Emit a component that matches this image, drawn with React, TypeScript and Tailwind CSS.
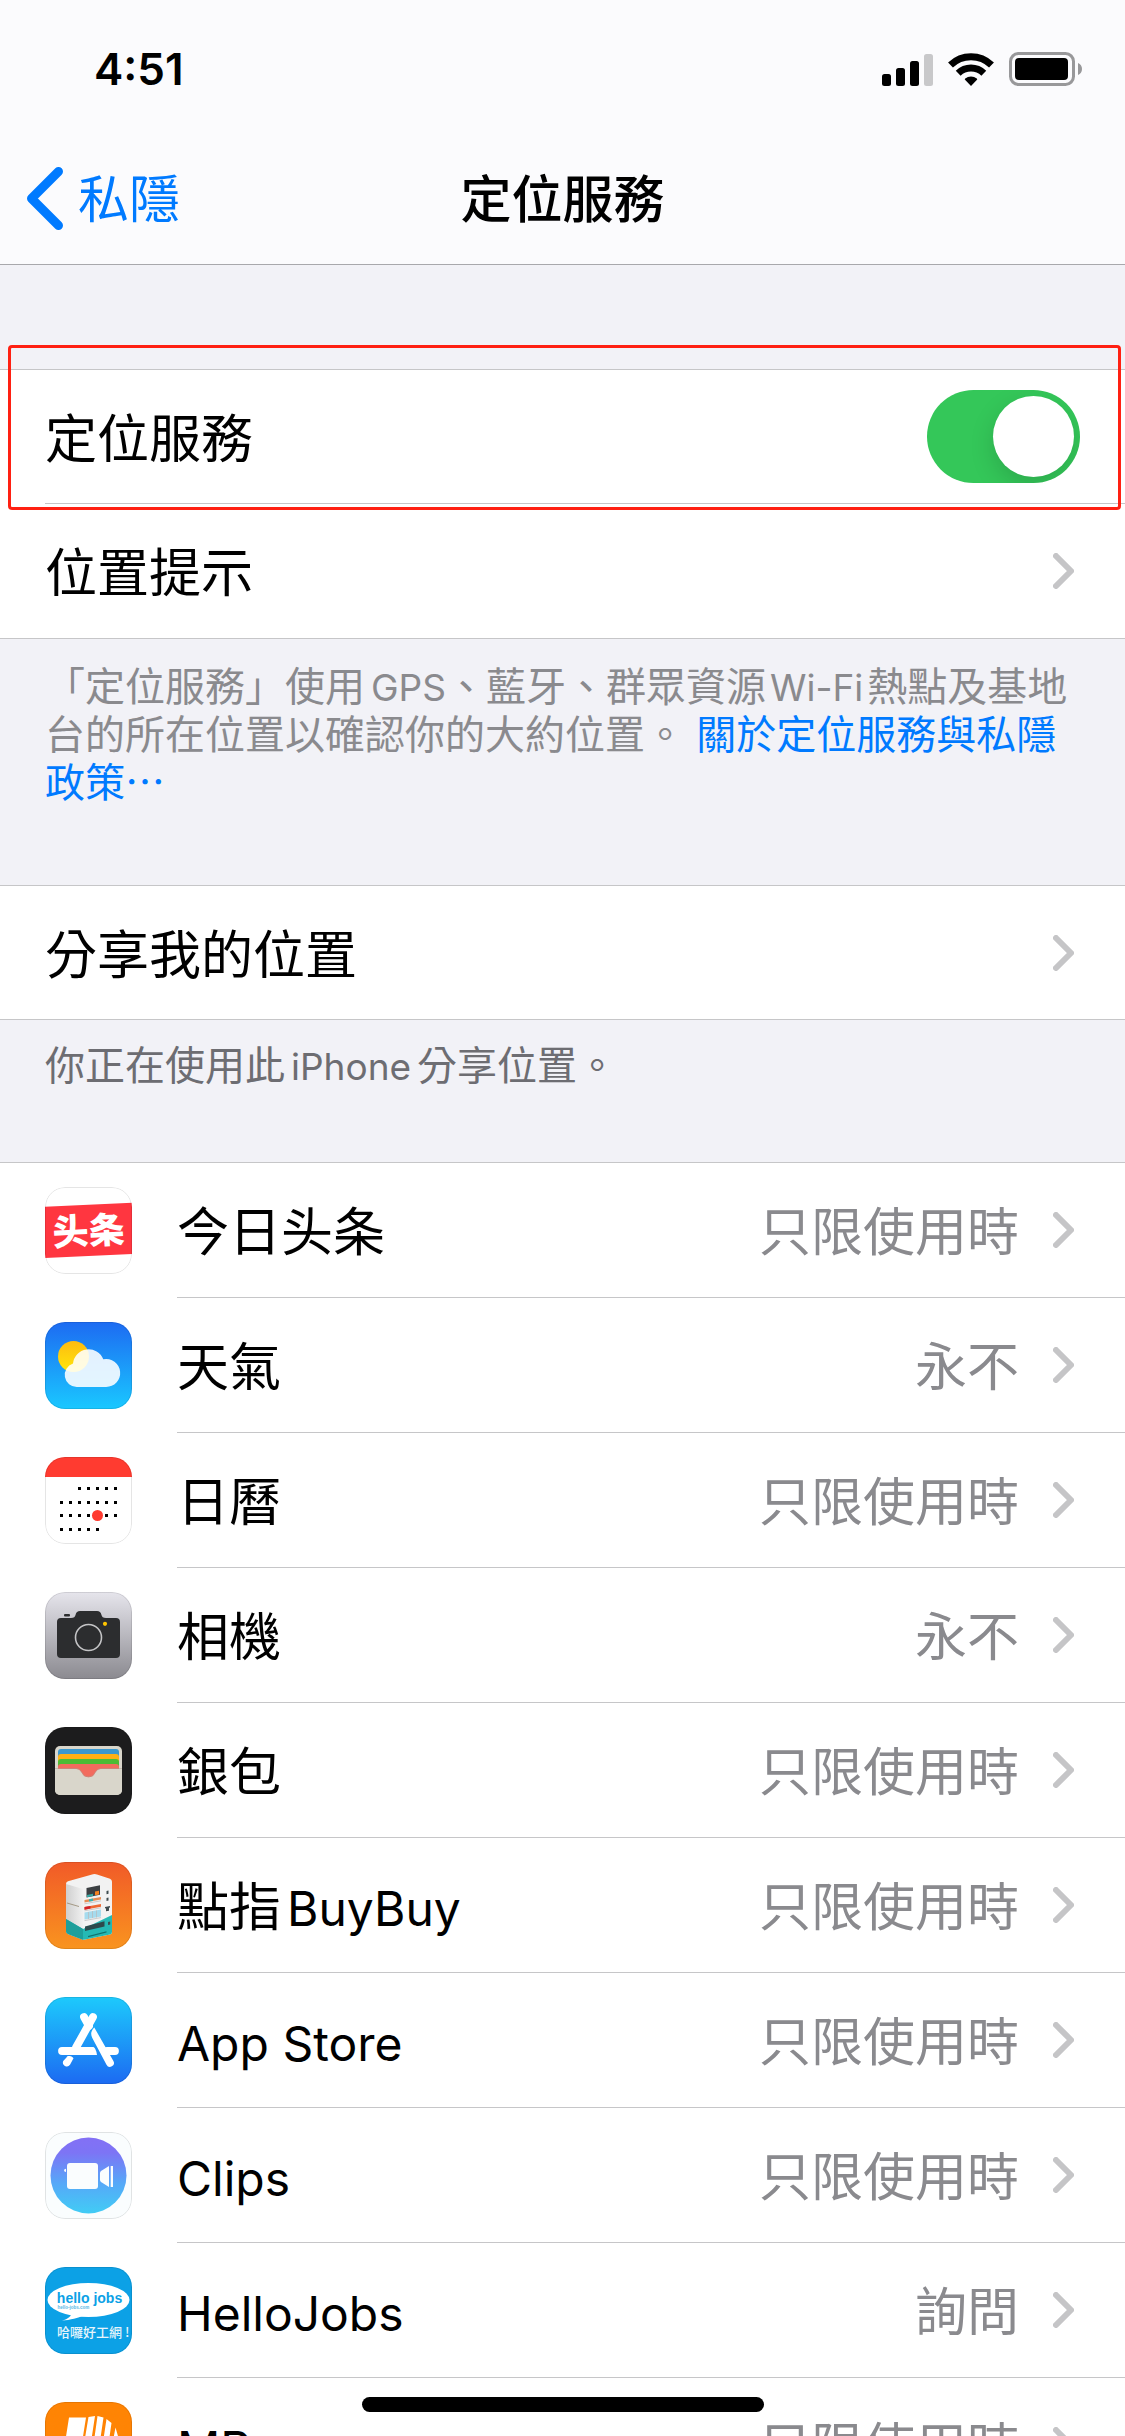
import * as React from "react"
import { useState } from "react"

type AppRow = {
    id: string
    name: React.ReactNode
    status: string
    icon: React.ReactNode
}

const ToutiaoIcon = (
    <svg viewBox="0 0 87 87" className="size-full" aria-hidden="true">
        <rect width="87" height="87" fill="#fff" />
        <path d="M0 19.7 87 15.7V67L0 71Z" fill="#ff3640" />
        <text x="43.5" y="57" transform="rotate(-3 43.5 43.5)" textAnchor="middle" fontSize="36" fontWeight="900" fill="#fff" fontFamily="'Noto Sans CJK SC', sans-serif">头条</text>
    </svg>
)

const WeatherIcon = (
    <svg viewBox="0 0 87 87" className="size-full" aria-hidden="true">
        <defs>
            <linearGradient id="weather-sky" x1="0" y1="0" x2="0" y2="1">
                <stop offset="0" stopColor="#1d6bf2" />
                <stop offset="1" stopColor="#1ac8ff" />
            </linearGradient>
            <linearGradient id="weather-sun" x1="0" y1="0" x2="0" y2="1">
                <stop offset="0" stopColor="#fdbb10" />
                <stop offset="1" stopColor="#ffe70a" />
            </linearGradient>
        </defs>
        <rect width="87" height="87" fill="url(#weather-sky)" />
        <circle cx="28.5" cy="34.5" r="15.5" fill="url(#weather-sun)" />
        <path d="M32 65A12 12 0 0 1 28 41.6A15.7 15.7 0 0 1 58.3 37.3A14 14 0 1 1 61 65Z" fill="#fff" opacity=".88" />
    </svg>
)

const calendarDots = [
    { y: 31.5, from: 2, to: 6 },
    { y: 45.5, from: 0, to: 6 },
    { y: 58.5, from: 0, to: 6 },
    { y: 72.5, from: 0, to: 4 },
]

const CalendarIcon = (
    <svg viewBox="0 0 87 87" className="size-full" aria-hidden="true">
        <rect width="87" height="87" fill="#fff" />
        <rect width="87" height="20" fill="#ff3b30" />
        {calendarDots.map((row) =>
            Array.from({ length: row.to - row.from + 1 }, (_, i) => (
                <rect key={`${row.y}-${i}`} x={15 + (row.from + i) * 9} y={row.y - 1.5} width="3" height="3" />
            ))
        )}
        <circle cx="52.5" cy="58.5" r="5.5" fill="#ff3b30" />
    </svg>
)

const CameraIcon = (
    <svg viewBox="0 0 87 87" className="size-full" aria-hidden="true">
        <defs>
            <linearGradient id="camera-bg" x1="0" y1="0" x2="0" y2="1">
                <stop offset="0" stopColor="#e6e5ec" />
                <stop offset="1" stopColor="#8b8a90" />
            </linearGradient>
        </defs>
        <rect width="87" height="87" fill="url(#camera-bg)" />
        <path d="M12 30a4 4 0 0 1 4-4h10c3 0 4-1 4.500-3 .8-3 2-4 4.500-4h17c2.500 0 3.700 1 4.500 4 .5 2 1.500 3 4.500 3h10a4 4 0 0 1 4 4v32a4 4 0 0 1-4 4H16a4 4 0 0 1-4-4Z" fill="#2c2d2f" />
        <rect x="19" y="22" width="6" height="2.500" rx="1" fill="#2c2d2f" />
        <circle cx="43.5" cy="45.5" r="13" fill="none" stroke="#c4c4c6" strokeWidth="1.6" />
        <circle cx="60" cy="31.8" r="2.1" fill="#ffc500" />
    </svg>
)

const WalletIcon = (
    <svg viewBox="0 0 87 87" className="size-full" aria-hidden="true">
        <rect width="87" height="87" fill="#1c1c1d" />
        <rect x="10" y="19" width="67" height="49" rx="5" fill="#d9d6cb" />
        <rect x="13" y="22" width="61" height="20" rx="3" fill="#3a98cf" />
        <rect x="13" y="27" width="61" height="20" rx="3" fill="#ffb014" />
        <rect x="13" y="32" width="61" height="20" rx="3" fill="#4cbb35" />
        <rect x="13" y="37" width="61" height="20" rx="3" fill="#f26b5e" />
        <path d="M10 42h20c4 0 5.500 1.500 7 4.200 1.500 2.600 3 4 6.500 4s5-1.400 6.500-4c1.500-2.700 3-4.200 7-4.200h20v21a5 5 0 0 1-5 5H15a5 5 0 0 1-5-5Z" fill="#d9d6cb" />
        <path d="M10 41.500h20c4 0 5.500 1.500 7 4.200 1.500 2.600 3 4 6.500 4s5-1.400 6.500-4c1.500-2.700 3-4.200 7-4.200h20" fill="none" stroke="#a89f92" strokeWidth=".5" />
    </svg>
)

const BuyBuyIcon = (
    <svg viewBox="0 0 87 87" className="size-full" aria-hidden="true">
        <defs>
            <linearGradient id="buybuy-bg" x1="0" y1="0" x2="0" y2="1">
                <stop offset="0" stopColor="#f15a28" />
                <stop offset="1" stopColor="#f9941f" />
            </linearGradient>
            <linearGradient id="buybuy-side" x1="0" y1="0" x2="1" y2="0">
                <stop offset="0" stopColor="#cfcfcf" />
                <stop offset="1" stopColor="#f0f0f0" />
            </linearGradient>
        </defs>
        <rect width="87" height="87" fill="url(#buybuy-bg)" />
        <path d="M21 22q0-2 2-2.700L48 12.300q2-.6 4 .2l13 4.200q2 .8 2 3V70q0 2-2 2.600L40 77.500q-2 .5-4-.5l-13-5q-2-1-2-3Z" fill="#f2f2f2" />
        <path d="M21 22 38 27v50.500L23 72q-2-1-2-3Z" fill="url(#buybuy-side)" />
        <path d="M21 57 38 67l29-14v17q0 2-2 2.600L40 77.500q-2 .5-4-.5l-13-5q-2-1-2-3Z" fill="#25b9b4" />
        <path d="M21 57 38 67v10.700l-15-5.700q-2-1-2-3Z" fill="#1f9f9b" />
        <path d="m41.500 26 13.500-2.700v9.400L41.500 35.500Z" fill="#3b3f42" />
        <path d="m50 29.500 4-.8v3.800l-4 .8Z" fill="#f58220" />
        <path d="m42 33 6-1.200v2.300l-6 1.200Z" fill="#36a9a4" />
        <path d="m39.500 38 16.500-3v2.500l-16.500 3Z" fill="#e58c55" />
        <path d="m44 37.200 4-.7v2.400l-4 .7Z" fill="#3cb4ae" />
        <path d="m39.500 45 16.500-3v2.700l-16.500 3Z" fill="#ee6a33" />
        <path d="m39.500 45 6-1.100v2.700l-6 1.100Z" fill="#d0222c" />
        <path d="m39.500 50.500 16.500-3v7l-16.500 3Z" fill="#a5dbee" />
        <path d="M39.500 41.800 56 38.800M39.500 48.800l16.500-3M39.500 58.600l16.500-3M43.500 50v7M47.500 49v7M51.500 48.500v7" stroke="#b9b9b9" strokeWidth=".7" fill="none" />
        <path d="m40 64.500 19.500-5.300v5.300L40 69Z" fill="#2d4a4c" />
        <path d="m43 74 18.500-4.700v1.200L43 75.300Z" fill="#12716e" />
        <path d="m61.500 29 2-.4v3.200l-2 .4ZM61.500 36l2-.4v3l-2 .4ZM60 45l5-1v1.500l-1 .2v3l-3 .6v-3l-1 .2ZM63 60l2.200-.5v3L63 63Z" fill="#3f4c50" />
        <path d="m22 40.500 12 3.500v1l-12-3.500Z" fill="#a39884" />
    </svg>
)

const AppStoreIcon = (
    <svg viewBox="0 0 87 87" className="size-full" aria-hidden="true">
        <defs>
            <linearGradient id="appstore-bg" x1="0" y1="0" x2="0" y2="1">
                <stop offset="0" stopColor="#1dcafc" />
                <stop offset="1" stopColor="#1c6af2" />
            </linearGradient>
        </defs>
        <rect width="87" height="87" fill="url(#appstore-bg)" />
        <g stroke="#fff" strokeWidth="7.800" strokeLinecap="round" fill="none">
            <path d="M48 20 31 50.500" />
            <path d="M39 20l5 9" />
            <path d="M70 54h-8" />
            <path d="M17 54h20" />
        </g>
        <path d="M28.500 50.100H48.500Q51 51.500 52 57.900H28.500Z" fill="#fff" />
        <path d="M49.300 30.500C46 34 45.300 37 47.300 41L61.500 67.800a3.900 3.900 0 0 0 6.900-3.800Z" fill="#fff" />
        <path d="M21.500 60.500c.6-1.300 1.500-1.700 3-1.500 2 .2 3.300 1 4 2.200L25 67.800a3.900 3.900 0 0 1-6.800-3.700Z" fill="#fff" />
    </svg>
)

const ClipsIcon = (
    <svg viewBox="0 0 87 87" className="size-full" aria-hidden="true">
        <defs>
            <linearGradient id="clips-lens" x1="0" y1="0" x2="0" y2="1">
                <stop offset="0" stopColor="#8370f5" />
                <stop offset=".2" stopColor="#7d74f5" />
                <stop offset=".6" stopColor="#56a8f8" />
                <stop offset="1" stopColor="#41ccf5" />
            </linearGradient>
        </defs>
        <rect width="87" height="87" fill="#fafdfe" />
        <circle cx="43.5" cy="43.5" r="38" fill="url(#clips-lens)" />
        <g fill="#fafdfe">
            <rect x="22" y="31" width="31" height="26" rx="3" />
            <path d="M21 36.700v3.300c-2.500-.3-2.500-3 0-3.300ZM55 41q0-1.200 1-2l8-5v21l-8-5q-1-.8-1-2Z" />
            <rect x="65.700" y="34" width="2.300" height="21" />
        </g>
    </svg>
)

const HelloJobsIcon = (
    <svg viewBox="0 0 87 87" className="size-full" aria-hidden="true">
        <rect width="87" height="87" fill="#0ca1e6" />
        <ellipse cx="43.5" cy="33" rx="41" ry="17" fill="#fff" />
        <path d="M26 46c1 3-3 6-9 7.700 8-.7 17-3 21-5.200Z" fill="#fff" />
        <text x="44.5" y="36" textAnchor="middle" fontSize="14" fontWeight="700" fill="#0ca1e6" fontFamily="'Liberation Sans Narrow', 'Liberation Sans', sans-serif">hello jobs</text>
        <text x="12.500" y="41.500" fontSize="4.500" fontWeight="700" fill="#5cb9e6" fontFamily="'Liberation Sans', sans-serif">hello-jobs.com</text>
        <text x="12" y="69.500" fontSize="13" fontWeight="500" fill="#e6f4fb" fontFamily="'Noto Sans CJK TC', sans-serif">哈囉好工網 !</text>
    </svg>
)

const MPayIcon = (
    <svg viewBox="0 0 87 87" className="size-full" aria-hidden="true">
        <rect width="87" height="87" fill="#ff8404" />
        <path d="M24 15.500h17L34 60H17ZM43.500 15l6.500-1-7 46h-7ZM52.500 14l6 1.500L52 60h-6ZM61.500 17l5 4L61 60h-6ZM70.500 25.500l3.500 12L69 60h-5Z" fill="#fff" />
    </svg>
)

const appRows: AppRow[] = [
    { id: "toutiao", name: "今日头条", status: "只限使用時", icon: ToutiaoIcon },
    { id: "weather", name: "天氣", status: "永不", icon: WeatherIcon },
    { id: "calendar", name: "日曆", status: "只限使用時", icon: CalendarIcon },
    { id: "camera", name: "相機", status: "永不", icon: CameraIcon },
    { id: "wallet", name: "銀包", status: "只限使用時", icon: WalletIcon },
    { id: "buybuy", name: <>點指<span className="ml-1.5 text-[48px]">BuyBuy</span></>, status: "只限使用時", icon: BuyBuyIcon },
    { id: "appstore", name: <span className="text-[48px]">App Store</span>, status: "只限使用時", icon: AppStoreIcon },
    { id: "clips", name: <span className="text-[48px]">Clips</span>, status: "只限使用時", icon: ClipsIcon },
    { id: "hellojobs", name: <span className="text-[48px]">HelloJobs</span>, status: "詢問", icon: HelloJobsIcon },
    { id: "mpay", name: <span className="text-[48px]">MPay</span>, status: "只限使用時", icon: MPayIcon },
]

function Chevron() {
    return (
        <svg viewBox="0 0 21 36" className="h-9 w-[21px] shrink-0" fill="none" stroke="#c5c5c7" strokeWidth="6" strokeLinecap="round" strokeLinejoin="round" aria-hidden="true">
            <path d="M3 3l15 15L3 33" />
        </svg>
    )
}

function StatusBar() {
    return (
        <div className="flex h-[132px] items-center justify-between pt-1.5 pr-[43px] pl-[94px]">
            <p className="text-[44px] leading-none font-semibold">4:51</p>
            <div className="flex items-center gap-[15px]">
                <svg viewBox="0 0 51 33" className="h-[33px] w-[51px]" aria-hidden="true">
                    <rect x="0" y="21" width="9" height="12" rx="2.500" />
                    <rect x="14" y="15" width="9" height="18" rx="2.500" />
                    <rect x="28" y="8" width="9" height="25" rx="2.500" />
                    <rect x="42" y="1" width="9" height="32" rx="2.500" fill="#c8c8ca" />
                </svg>
                <svg viewBox="0 0 46 33" className="h-[33px] w-[46px]" fill="none" stroke="#000" strokeWidth="7" aria-hidden="true">
                    <path d="M2.500 12.100a29.500 29.500 0 0 1 41 0" />
                    <path d="M10.200 20.200a18.500 18.500 0 0 1 25.600 0" />
                    <path d="M23 33l-6-6.200q-.6-.8.200-1.400a9.500 9.500 0 0 1 11.600 0q.8.600.2 1.400Z" fill="#000" stroke="none" />
                </svg>
                <svg viewBox="0 0 73 34" className="h-[34px] w-[73px]" aria-hidden="true">
                    <rect x="1.500" y="1.500" width="63" height="31" rx="8" fill="none" stroke="#98989a" strokeWidth="3" />
                    <rect x="6" y="6" width="53" height="22" rx="4" />
                    <path d="M69 11v12c2.500-1 4-3.200 4-6s-1.500-5-4-6Z" fill="#98989a" />
                </svg>
            </div>
        </div>
    )
}

export default function App() {
    const [locationOn, setLocationOn] = useState(true)

    return (
        <div lang="zh-Hant" className="relative flex h-screen flex-col overflow-hidden bg-[#f2f2f7] text-black font-['Inter','Noto_Sans_CJK_TC',sans-serif]">
            <header className="shrink-0 border-b border-[#a8a8ac] bg-[#fbfbfd]">
                <StatusBar />
                <nav className="grid h-[132px] grid-cols-[1fr_auto_1fr] items-center px-[27px]">
                    <a href="#privacy" className="flex items-center gap-[15px] text-[51px] leading-none text-[#007aff]">
                        <svg viewBox="0 0 36 63" className="h-[63px] w-9" fill="none" stroke="currentColor" strokeWidth="9" strokeLinecap="round" strokeLinejoin="round" aria-hidden="true">
                            <path d="M31.500 4.500l-27 27 27 27" />
                        </svg>
                        <span className="pt-0.5">私隱</span>
                    </a>
                    <h1 className="pt-0.5 text-[51px] leading-none font-medium">定位服務</h1>
                </nav>
            </header>

            <main className="min-h-0 flex-1 overflow-y-auto [scrollbar-width:none]">
                <section className="relative mt-[104px] border-y border-[#c6c6c8] bg-white pl-[45px] text-[52px] leading-none">
                    <label className="flex min-h-[134px] items-center justify-between border-b border-[#c6c6c8] pr-[45px]">
                        <span className="pt-1.5">定位服務</span>
                        <input
                            type="checkbox"
                            role="switch"
                            checked={locationOn}
                            onChange={(e) => setLocationOn(e.target.checked)}
                            className="flex h-[93px] w-[153px] shrink-0 cursor-pointer appearance-none items-center overflow-hidden rounded-full bg-[#e9e9eb] p-1.5 before:size-[81px] before:rounded-full before:bg-white before:shadow-[0_9px_24px_rgba(0,0,0,0.15)] checked:justify-end checked:bg-[#34c759]"
                        />
                    </label>
                    <a href="#alerts" className="flex min-h-[134px] items-center justify-between pr-[51px]">
                        <span className="pt-1.5">位置提示</span>
                        <Chevron />
                    </a>
                    {/* red callout round the main switch */}
                    <div className="pointer-events-none absolute -top-[25px] right-1 left-2 h-[165px] rounded-sm border-3 border-[#ff2012]" />
                </section>
                <p className="px-[45px] pt-6 pb-[78px] text-[40px] leading-12 text-[#8a8a8e]">
                    「定位服務」使用<span className="ml-1.5 text-[37px] leading-none">GPS</span>、藍牙、群眾資源<span className="mx-1 text-[37px] leading-none">Wi-Fi</span>熱點及基地台的所在位置以確認你的大約位置。 <a href="#about" className="text-[#007aff]">關於定位服務與私隱政策⋯</a>
                </p>

                <section className="border-y border-[#c6c6c8] bg-white pl-[45px] text-[52px] leading-none">
                    <a href="#share" className="flex min-h-[133px] items-center justify-between pr-[51px]">
                        <span className="pt-1.5">分享我的位置</span>
                        <Chevron />
                    </a>
                </section>
                <p className="px-[45px] pt-[22px] pb-[72px] text-[40px] leading-12 text-[#6d6d72]">
                    你正在使用此<span className="mx-1.5 text-[37px] leading-none">iPhone</span>分享位置。
                </p>

                <ul className="border-t border-[#c6c6c8] bg-white text-[52px] leading-none">
                    {appRows.map((app) => (
                        <li key={app.id}>
                            <a href={`#${app.id}`} className="flex items-center gap-[45px] pl-[45px]">
                                <span className="relative size-[87px] shrink-0 overflow-hidden rounded-[20px] after:absolute after:inset-0 after:rounded-[20px] after:border after:border-black/10">
                                    {app.icon}
                                </span>
                                <span className="flex min-h-[135px] flex-1 items-center justify-between border-b border-[#c6c6c8] pr-[51px]">
                                    <span className="pt-1.5">{app.name}</span>
                                    <span className="flex items-center gap-[34px] text-[#8a8a8e]">
                                        <span className="pt-1.5">{app.status}</span>
                                        <Chevron />
                                    </span>
                                </span>
                            </a>
                        </li>
                    ))}
                </ul>
            </main>

            <div className="absolute bottom-6 left-1/2 h-[15px] w-[402px] -translate-x-1/2 rounded-full bg-black" />
        </div>
    )
}
